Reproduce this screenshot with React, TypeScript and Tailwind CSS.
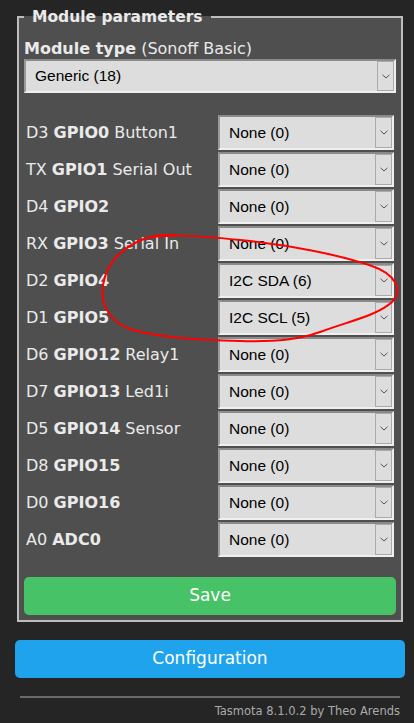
import React from "react";

type Pin = {
  pad: string;
  gpio: string;
  name: string;
  value: string;
};

const pins: Pin[] = [
  { pad: "D3", gpio: "GPIO0", name: "Button1", value: "None (0)" },
  { pad: "TX", gpio: "GPIO1", name: "Serial Out", value: "None (0)" },
  { pad: "D4", gpio: "GPIO2", name: "", value: "None (0)" },
  { pad: "RX", gpio: "GPIO3", name: "Serial In", value: "None (0)" },
  { pad: "D2", gpio: "GPIO4", name: "", value: "I2C SDA (6)" },
  { pad: "D1", gpio: "GPIO5", name: "", value: "I2C SCL (5)" },
  { pad: "D6", gpio: "GPIO12", name: "Relay1", value: "None (0)" },
  { pad: "D7", gpio: "GPIO13", name: "Led1i", value: "None (0)" },
  { pad: "D5", gpio: "GPIO14", name: "Sensor", value: "None (0)" },
  { pad: "D8", gpio: "GPIO15", name: "", value: "None (0)" },
  { pad: "D0", gpio: "GPIO16", name: "", value: "None (0)" },
  { pad: "A0", gpio: "ADC0", name: "", value: "None (0)" },
];

const Chevron = () => (
  <svg width="8" height="5" viewBox="0 0 8 5">
    <path d="M0.5 0.8 L4 4 L7.5 0.8" fill="none" stroke="#555" strokeWidth="1" />
  </svg>
);

const FakeSelect = ({ value, className }: { value: string; className: string }) => {
  return (
    <div
      className={`flex items-center bg-[#dddddd] border-2 border-t-[#8a8a8a] border-l-[#9a9a9a] border-r-[#efefef] border-b-[#efefef] ${className}`}
    >
      <span className="pl-[9px] text-[15.5px] text-black font-['Liberation_Sans',Arial,sans-serif]">
        {value}
      </span>
      <div className="ml-auto h-full w-[17px] border border-[#aaaaaa] flex items-center justify-center">
        <Chevron />
      </div>
    </div>
  );
};

export default function App() {
  return (
    <div className="relative min-h-[723px] w-full bg-[#252525] overflow-hidden font-['DejaVu_Sans',sans-serif] text-[#eaeaea]">
      <div className="w-[390px] ml-[15px] pt-[8px]">
        <fieldset className="mx-[2px] border-2 border-[#bdbdbd] bg-[#4f4f4f] px-[5px] pb-[5px]">
          <legend className="px-2 text-[15.5px] leading-[18px] font-bold text-[#eaeaea]">
            Module parameters
          </legend>
          <p className="mt-[13px] text-[16px] leading-[19px]">
            <b>Module type</b> (Sonoff Basic)
          </p>
          <FakeSelect value="Generic (18)" className="h-[34px] mt-[1px] w-full" />

          <div className="mt-[21px]">
            {pins.map((p) => (
              <div key={p.gpio} className="flex items-center h-[37px]">
                <div className="w-[194px] pl-[2px] text-[16px] whitespace-nowrap">
                  {p.pad} <b>{p.gpio}</b>
                  {p.name ? ` ${p.name}` : ""}
                </div>
                <FakeSelect value={p.value} className="w-[176px] h-[35px]" />
              </div>
            ))}
          </div>

          <button className="mt-[19px] w-full h-[38px] rounded-[5px] bg-[#47c266] text-white text-[17px]">
            Save
          </button>
        </fieldset>

        <button className="mt-[18px] w-full h-[38px] rounded-[5px] bg-[#1fa3ec] text-white text-[17px]">
          Configuration
        </button>

        <div className="mx-[5px] mt-[18px] h-[2px] bg-[#6a6a6a]" />
        <div className="mx-[5px] mt-[6px] text-right text-[11.5px] leading-[14px] text-[#aaaaaa]">
          Tasmota 8.1.0.2 by Theo Arends
        </div>
      </div>

      {/* hand-drawn red annotation */}
      <svg
        className="absolute top-0 left-0 pointer-events-none"
        width="414"
        height="723"
        viewBox="0 0 414 723"
      >
        <path
          d="M138 241 C160 232 200 236 240 240 C290 245 340 255 372 266 C395 274 404 290 392 302 C378 315 350 321 320 332 C300 339 280 342 240 341 C200 340 160 338 130 329 C108 321 100 302 103 285 C106 266 118 252 135 243 C148 236 162 234 175 235"
          fill="none"
          stroke="#ff0000"
          strokeWidth="2"
          strokeLinecap="round"
        />
      </svg>
    </div>
  );
}
